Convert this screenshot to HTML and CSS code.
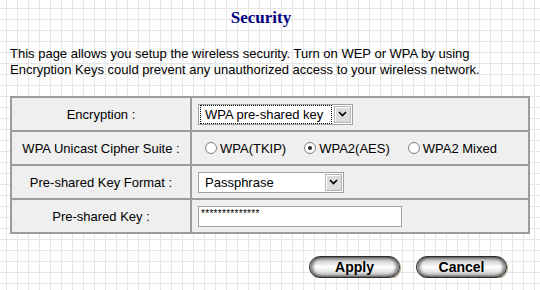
FILE: index.html
```html
<!DOCTYPE html>
<html lang="en">
<head>
    <meta charset="UTF-8">
    <title>Security</title>
    <link rel="stylesheet" href="styles.css">
</head>
<body>

    <h1 class="title">Security</h1>

    <p class="intro">This page allows you setup the wireless security. Turn on WEP or WPA by using Encryption Keys could prevent any unauthorized access to your wireless network.</p>

    <table class="settings">
        <!-- Encryption -->
        <tr>
            <td class="label">Encryption :</td>
            <td class="field">
                <div class="combo combo-enc">
                    <span class="combo-text focused">WPA pre-shared key</span>
                    <span class="combo-arrow">
                        <svg width="9" height="6" viewBox="0 0 9 6"><path d="M1 1 L4.5 4.5 L8 1" fill="none" stroke="#000" stroke-width="1.6"/></svg>
                    </span>
                </div>
            </td>
        </tr>

        <!-- Cipher suite -->
        <tr>
            <td class="label">WPA Unicast Cipher Suite :</td>
            <td class="field">
                <div class="radios">
                    <label class="radio"><span class="dot"></span>WPA(TKIP)</label>
                    <label class="radio"><span class="dot checked"></span>WPA2(AES)</label>
                    <label class="radio"><span class="dot"></span>WPA2 Mixed</label>
                </div>
            </td>
        </tr>

        <!-- Key format -->
        <tr>
            <td class="label">Pre-shared Key Format :</td>
            <td class="field">
                <div class="combo combo-fmt">
                    <span class="combo-text">Passphrase</span>
                    <span class="combo-arrow">
                        <svg width="9" height="6" viewBox="0 0 9 6"><path d="M1 1 L4.5 4.5 L8 1" fill="none" stroke="#000" stroke-width="1.6"/></svg>
                    </span>
                </div>
            </td>
        </tr>

        <!-- Key -->
        <tr>
            <td class="label">Pre-shared Key :</td>
            <td class="field">
                <div class="keybox">**************</div>
            </td>
        </tr>
    </table>

    <div class="actions">
        <button class="pill">Apply</button>
        <button class="pill">Cancel</button>
    </div>

</body>
</html>
```

FILE: styles.css
```css
body {
    margin: 0;
    font-family: "Liberation Sans", Arial, sans-serif;
    font-size: 13px;
    color: #000;
    background-color: #fff;
    background-image:
        linear-gradient(to right, #e6e6e6 1px, transparent 1px),
        linear-gradient(to bottom, #e6e6e6 1px, transparent 1px);
    background-size: 11px 11px;
    background-position: 6px 8px;
}

.title {
    margin: 0;
    padding: 8px 18px 0 0;
    font-family: "Liberation Serif", "Times New Roman", serif;
    font-size: 17px;
    line-height: 20px;
    font-weight: bold;
    color: #000080;
    text-align: center;
}

.intro {
    margin: 18px 10px 0 10px;
    line-height: 16px;
    width: 480px;
}

.settings {
    margin: 18px 0 0 10px;
    width: 520px;
    border-collapse: collapse;
    border: 2px solid #9c9c9c;
}

.settings td {
    border: 2px solid #9c9c9c;
    background: #efefef;
    height: 32px;
    padding: 0;
}

.label {
    width: 178px;
    text-align: center;
}

.field {
    padding-left: 6px !important;
}

.combo {
    display: flex;
    align-items: center;
    height: 19px;
    border: 1px solid #a0a0a0;
    background: #fff;
    padding: 0 1px;
}

.combo-enc {
    width: 151px;
}

.combo-fmt {
    width: 142px;
}

.combo-text {
    flex: 1;
    height: 17px;
    line-height: 17px;
    padding-left: 4px;
    border: 1px solid transparent;
}

.combo-text.focused {
    border: 1px dotted #000;
}

.combo-arrow {
    display: flex;
    align-items: center;
    justify-content: center;
    width: 15px;
    height: 15px;
    margin-left: 2px;
    background: #dcdcdc;
    border: 1px solid #b4b4b4;
    box-shadow: inset 1px 1px #fff;
}

.radios {
    display: flex;
    gap: 18px;
    padding-left: 7px;
}

.radio {
    display: flex;
    align-items: center;
    gap: 3px;
}

.dot {
    width: 10px;
    height: 10px;
    border: 1px solid #808080;
    border-radius: 50%;
    background: #fff;
    display: flex;
    align-items: center;
    justify-content: center;
}

.dot.checked::after {
    content: "";
    width: 4px;
    height: 4px;
    border-radius: 50%;
    background: #222;
}

.keybox {
    width: 204px;
    height: 21px;
    box-sizing: border-box;
    border: 1px solid #a0a0a0;
    padding: 1px 1px 0 2px;
    font-size: 10px;
    line-height: 12px;
    letter-spacing: 0.3px;
    background: #fff;
    overflow: hidden;
}

.actions {
    display: flex;
    justify-content: flex-end;
    gap: 16px;
    margin: 22px 33px 0 0;
}

.pill {
    width: 91px;
    height: 22px;
    border: 1px solid #2b2b2b;
    border-radius: 11px;
    font-family: "Liberation Sans", Arial, sans-serif;
    font-size: 14px;
    font-weight: bold;
    color: #000;
    padding: 0;
    background: linear-gradient(to bottom, #8a8a8a 0%, #dcdcdc 25%, #ffffff 50%, #e2e2e2 75%, #9a9a9a 100%);
    box-shadow: inset 3px 0 3px rgba(0, 0, 0, 0.45), inset -3px 0 3px rgba(0, 0, 0, 0.45), 1px 1px 0 #b8a890;
}
```
